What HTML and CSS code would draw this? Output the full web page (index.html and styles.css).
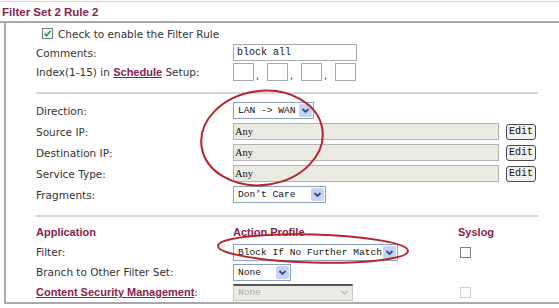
FILE: index.html
```html
<!DOCTYPE html>
<html lang="en">
<head>
    <meta charset="UTF-8">
    <title>Filter Set 2 Rule 2</title>
    <link rel="stylesheet" href="styles.css">
</head>
<body>
    <div class="title">Filter Set 2 Rule 2</div>
    <div class="panel">
        <div class="row short check-row">
            <span class="checkbox checked"><svg width="9" height="9" viewBox="0 0 9 9"><path d="M1.5 4.5 L3.6 6.8 L7.6 1.8" fill="none" stroke="#21a121" stroke-width="1.6"/></svg></span>
            <span>Check to enable the Filter Rule</span>
        </div>
        <div class="row short">
            <div class="label">Comments:</div>
            <div class="field comments">block all</div>
        </div>
        <div class="row">
            <div class="label">Index(1-15) in <a class="link">Schedule</a> Setup:</div>
            <div class="index-set">
                <span class="field small-in"></span><span class="comma">,</span>
                <span class="field small-in"></span><span class="comma">,</span>
                <span class="field small-in"></span><span class="comma">,</span>
                <span class="field small-in"></span>
            </div>
        </div>
        <div class="sep"></div>

        <div class="row tall">
            <div class="label">Direction:</div>
            <div class="select dir"><span class="val">LAN -&gt; WAN</span><span class="arrow"></span></div>
        </div>
        <div class="row tall">
            <div class="label">Source IP:</div>
            <div class="field ro">Any</div>
            <button class="edit">Edit</button>
        </div>
        <div class="row tall">
            <div class="label">Destination IP:</div>
            <div class="field ro">Any</div>
            <button class="edit">Edit</button>
        </div>
        <div class="row tall">
            <div class="label">Service Type:</div>
            <div class="field ro">Any</div>
            <button class="edit">Edit</button>
        </div>
        <div class="row tall">
            <div class="label">Fragments:</div>
            <div class="select frag"><span class="val">Don&#8217;t Care</span><span class="arrow"></span></div>
        </div>
        <div class="sep second"></div>

        <div class="row">
            <div class="label head">Application</div>
            <div class="cell head">Action Profile</div>
            <div class="head">Syslog</div>
        </div>
        <div class="row">
            <div class="label">Filter:</div>
            <div class="cell"><div class="select filter"><span class="val">Block If No Further Match</span><span class="arrow"></span></div></div>
            <span class="checkbox syslog"></span>
        </div>
        <div class="row">
            <div class="label">Branch to Other Filter Set:</div>
            <div class="cell"><div class="select branch"><span class="val">None</span><span class="arrow"></span></div></div>
        </div>
        <div class="row">
            <div class="label"><a class="link">Content Security Management</a>:</div>
            <div class="cell"><div class="select csm disabled"><span class="val">None</span><span class="arrow"></span></div></div>
            <span class="checkbox syslog off"></span>
        </div>
    </div>

    <svg class="marks" width="559" height="308" viewBox="0 0 559 308">
        <ellipse cx="262" cy="138" rx="61" ry="47" transform="rotate(-8 262 138)" fill="none" stroke="#b3262f" stroke-width="2"/>
        <ellipse cx="313" cy="248.5" rx="95" ry="14" transform="rotate(1.5 313 248.5)" fill="none" stroke="#b3262f" stroke-width="2"/>
    </svg>
</body>
</html>
```

FILE: styles.css
```css
body {
    margin: 0;
    font-family: "DejaVu Sans", Verdana, sans-serif;
    font-size: 10.5px;
    color: #333;
    background: #fff;
    width: 559px;
    height: 308px;
    overflow: hidden;
    position: relative;
}
.title {
    margin-top: 1px;
    height: 19px;
    line-height: 20px;
    padding-left: 2px;
    border-top: 1px solid #cfcfcf;
    border-bottom: 2px solid #a9a9a9;
    font-family: "Liberation Sans", Arial, sans-serif;
    font-weight: bold;
    font-size: 11.5px;
    color: #88224a;
}
.panel {
    margin-left: 4px;
    height: 281px;
    box-sizing: border-box;
    border-left: 2px solid #a9a9a9;
    border-bottom: 2px solid #a9a9a9;
    padding: 1px 0 0 30px;
}
.row {
    display: flex;
    align-items: center;
    height: 20px;
}
.row.short {
    height: 19px;
}
.row.tall {
    height: 21px;
}
.check-row {
    padding-left: 6px;
    gap: 5px;
}
.label {
    width: 197px;
    flex: none;
}
.cell {
    width: 225px;
    flex: none;
}
.head {
    font-family: "Liberation Sans", Arial, sans-serif;
    font-weight: bold;
    font-size: 11px;
    color: #88224a;
}
.link {
    font-family: "Liberation Sans", Arial, sans-serif;
    font-weight: bold;
    font-size: 11px;
    color: #88224a;
    text-decoration: underline;
}
.sep {
    height: 2px;
    width: 502px;
    background: #d6d6d6;
    margin: 10px 0 6px;
}
.sep.second {
    margin: 10px 0 5px;
}
.checkbox {
    display: inline-flex;
    align-items: center;
    justify-content: center;
    width: 11px;
    height: 11px;
    box-sizing: border-box;
    border: 1px solid #6f7f8f;
    background: #fbfbfb;
}
.syslog {
    margin-left: 2px;
}
.syslog.off {
    border-color: #d0d0d0;
}
.field {
    height: 17px;
    box-sizing: border-box;
    border: 1px solid #a7a7a7;
    background: #fff;
    font-family: "Liberation Mono", "Courier New", monospace;
    font-size: 10px;
    line-height: 15px;
    padding-left: 3px;
    color: #111;
}
.comments {
    width: 124px;
}
.index-set {
    display: flex;
    align-items: flex-end;
}
.small-in {
    width: 21px;
    height: 18px;
}
.comma {
    width: 13px;
    padding-left: 2px;
    box-sizing: border-box;
    font-size: 10px;
}
.ro {
    width: 266px;
    background: #ebeae2;
    border-color: #b4b4b0;
    font-family: "Liberation Serif", "Times New Roman", serif;
    font-size: 10.5px;
    padding-left: 1px;
}
.edit {
    margin-left: 7px;
    width: 30px;
    height: 16px;
    padding: 0;
    border: 1px solid #4a4a4a;
    border-radius: 3px;
    background: #f1f1ee;
    font-family: "Liberation Mono", "Courier New", monospace;
    font-size: 10px;
    color: #111;
}
.select {
    display: flex;
    align-items: center;
    justify-content: space-between;
    height: 17px;
    box-sizing: border-box;
    border: 1px solid #8aa0bb;
    background: #fff;
    padding: 0 1px 0 4px;
    font-family: "Liberation Mono", "Courier New", monospace;
    font-size: 9.6px;
    color: #111;
}
.arrow {
    width: 13px;
    height: 13px;
    border-radius: 2px;
    background: #c5d4f2 url("data:image/svg+xml;utf8,<svg xmlns='http://www.w3.org/2000/svg' width='13' height='13'><path d='M3.5 5 L6.5 8 L9.5 5' fill='none' stroke='%23344f8c' stroke-width='1.8'/></svg>") no-repeat center;
}
.dir { width: 81px; }
.frag { width: 93px; }
.filter { width: 165px; }
.branch { width: 58px; }
.csm { width: 120px; }
.disabled {
    background: #ecebe3;
    border-color: #c9c9c2;
    border-top: 2px solid #555;
    color: #aaa;
}
.disabled .arrow {
    background: url("data:image/svg+xml;utf8,<svg xmlns='http://www.w3.org/2000/svg' width='13' height='13'><path d='M3.5 5 L6.5 8 L9.5 5' fill='none' stroke='%23bbbbbb' stroke-width='1.4'/></svg>") no-repeat center;
}
.marks {
    position: absolute;
    left: 0;
    top: 0;
    pointer-events: none;
}
```
